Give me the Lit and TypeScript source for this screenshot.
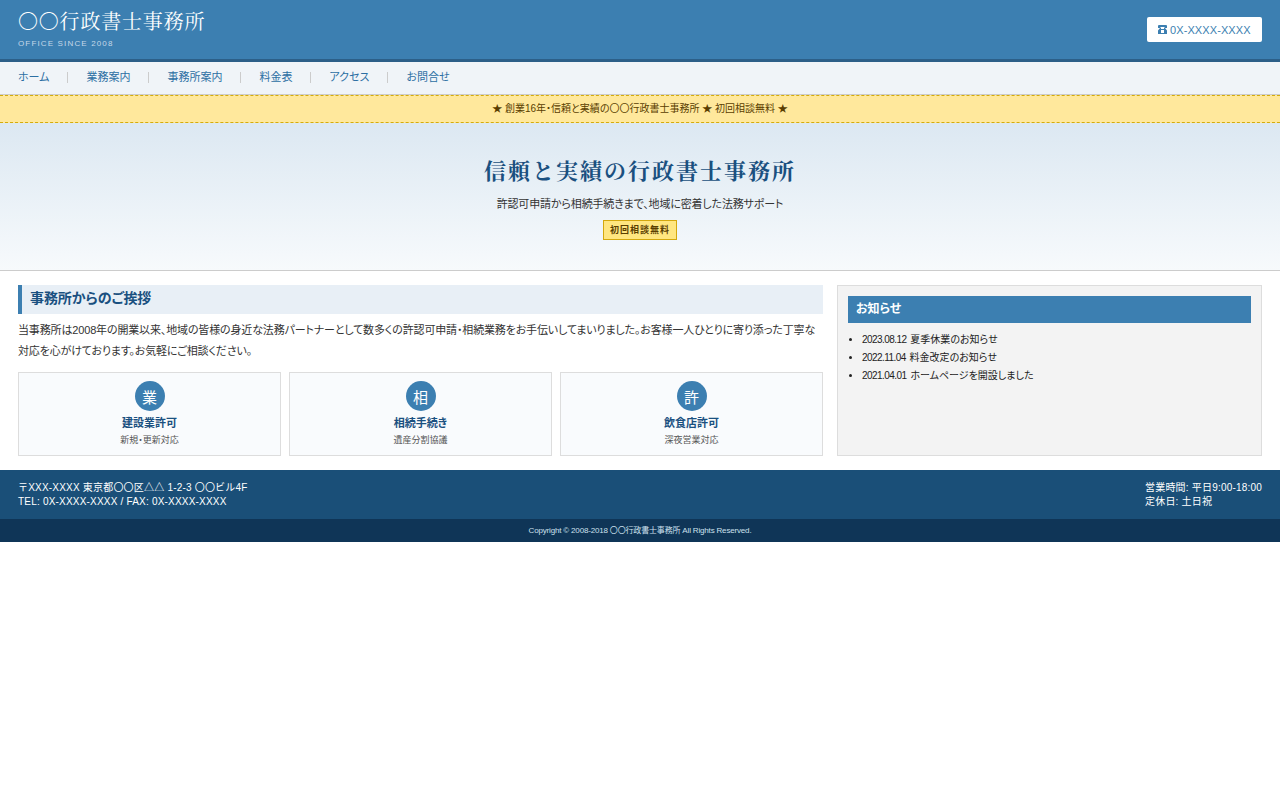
import { LitElement, html, css } from "lit";
import { customElement } from "lit/decorators.js";

const NAV = ["ホーム", "業務案内", "事務所案内", "料金表", "アクセス", "お問合せ"];

const SERVICES = [
  { icon: "業", title: "建設業許可", note: "新規・更新対応" },
  { icon: "相", title: "相続手続き", note: "遺産分割協議" },
  { icon: "許", title: "飲食店許可", note: "深夜営業対応" },
];

const NEWS = [
  { date: "2023.08.12", text: "夏季休業のお知らせ" },
  { date: "2022.11.04", text: "料金改定のお知らせ" },
  { date: "2021.04.01", text: "ホームページを開設しました" },
];

@customElement("app-root")
export class AppRoot extends LitElement {
  static styles = css`
    :host {
      display: block;
      font-family: "Liberation Sans", "Noto Sans CJK JP", sans-serif;
      font-size: 11px;
      font-feature-settings: "palt";
      color: #333;
      background: #fff;
    }

    .header {
      display: flex;
      justify-content: space-between;
      align-items: center;
      height: 59px;
      padding: 0 18px;
      background: #3c7fb1;
      border-bottom: 3px solid #2c5f88;
    }

    .logo {
      font-family: "Liberation Serif", "Noto Serif CJK JP", "Noto Sans CJK JP", serif;
      font-size: 20px;
      line-height: 24px;
      letter-spacing: 0.8px;
      font-feature-settings: normal;
      color: #fff;
    }

    .since {
      margin-top: 5px;
      font-size: 8px;
      line-height: 10px;
      letter-spacing: 1.15px;
      color: #c5d8e8;
    }

    .tel {
      display: flex;
      align-items: center;
      gap: 3px;
      width: 115px;
      height: 25px;
      box-sizing: border-box;
      padding-left: 11px;
      background: #fff;
      border-radius: 2px;
      color: #3c7fb1;
      letter-spacing: 0.1px;
    }

    .tel svg {
      width: 9px;
      height: 9px;
      fill: #3c7fb1;
    }

    .nav {
      display: flex;
      align-items: center;
      height: 30px;
      padding: 0 18px 2px;
      background: #f0f4f8;
      border-bottom: 1px solid #ccc;
      color: #2c6fa3;
    }

    .nav span {
      padding-right: 18px;
      margin-right: 18px;
      border-right: 1px solid #ccc;
      line-height: 11px;
    }

    .nav span:last-child {
      border-right: none;
    }

    .notice {
      height: 26px;
      line-height: 26px;
      text-align: center;
      background: #ffe89c;
      border-top: 1px dashed #d4ac0d;
      border-bottom: 1px dashed #d4ac0d;
      color: #5a3e00;
      font-size: 10px;
    }

    .hero {
      box-sizing: border-box;
      height: 148px;
      padding-top: 35px;
      text-align: center;
      background: linear-gradient(#dce8f2, #f7fafc);
      border-bottom: 1px solid #ccc;
    }

    .hero h1 {
      margin: 0;
      font-family: "Liberation Serif", "Noto Serif CJK JP", "Noto Sans CJK JP", serif;
      font-size: 22px;
      line-height: 28px;
      font-weight: 700;
      letter-spacing: 2px;
      font-feature-settings: normal;
      color: #1a5080;
    }

    .hero p {
      margin: 11px 0 0;
      line-height: 14px;
      letter-spacing: -0.15px;
    }

    .badge {
      display: block;
      width: fit-content;
      margin: 9px auto 0;
      padding: 0 6px;
      line-height: 18px;
      font-size: 9px;
      font-weight: 700;
      letter-spacing: 1px;
      font-feature-settings: normal;
      background: #ffe680;
      border: 1px solid #d4a80d;
      color: #5a3e00;
    }

    .main {
      display: flex;
      gap: 14px;
      padding: 14px 18px;
    }

    .content {
      width: 805px;
    }

    .content h2 {
      margin: 0;
      padding-left: 8px;
      height: 29px;
      line-height: 27px;
      font-size: 14px;
      letter-spacing: -0.1px;
      color: #1a5080;
      background: #e8eff6;
      border-left: 4px solid #3c7fb1;
    }

    .content p {
      margin: 6px 0 10px;
      line-height: 21px;
      letter-spacing: -0.15px;
      color: #333;
    }

    .cards {
      display: grid;
      grid-template-columns: repeat(3, 1fr);
      gap: 8px;
    }

    .card {
      height: 84px;
      box-sizing: border-box;
      padding-top: 8px;
      text-align: center;
      background: #f9fbfd;
      border: 1px solid #ddd;
    }

    .circle {
      display: flex;
      align-items: center;
      justify-content: center;
      width: 30px;
      height: 30px;
      margin: 0 auto;
      border-radius: 50%;
      background: #3c7fb1;
      color: #fff;
      font-size: 15px;
    }

    .card strong {
      display: block;
      margin-top: 5px;
      font-size: 11px;
      line-height: 14px;
      color: #1a5080;
    }

    .card small {
      display: block;
      margin-top: 4px;
      font-size: 9px;
      line-height: 12px;
      color: #555;
    }

    .side {
      width: 425px;
      box-sizing: border-box;
      padding: 10px;
      background: #f3f3f3;
      border: 1px solid #ddd;
    }

    .side h3 {
      margin: 0;
      height: 27px;
      line-height: 26px;
      padding-left: 8px;
      font-size: 12px;
      color: #fff;
      background: #3c7fb1;
    }

    .side ul {
      margin: 8px 0 0;
      padding-left: 14px;
      color: #222;
      font-size: 10px;
    }

    .side li {
      line-height: 18px;
    }

    .date {
      letter-spacing: -0.55px;
      margin-right: 1px;
    }

    .footer {
      display: flex;
      justify-content: space-between;
      align-items: center;
      height: 49px;
      padding: 0 18px;
      background: #1a4f78;
      color: #fff;
      font-size: 10px;
      line-height: 14px;
      letter-spacing: 0.2px;
      font-feature-settings: normal;
    }

    .copy {
      height: 23px;
      line-height: 23px;
      text-align: center;
      font-size: 8px;
      letter-spacing: -0.17px;
      background: #0f3557;
      color: #cde0ee;
    }
  `;

  render() {
    return html`
      <div class="header">
        <div>
          <div class="logo">〇〇行政書士事務所</div>
          <div class="since">OFFICE SINCE 2008</div>
        </div>
        <div class="tel">
          <svg viewBox="0 0 9 9">
            <path d="M0 1 Q0 0 1 0 H8 Q9 0 9 1 V3 H6.5 V2 H2.5 V3 H0 Z" />
            <path d="M2 3 H3 V4 H6 V3 H7 L9 5.5 V9 H0 V5.5 Z M3 5 V8 H6 V5 Z" fill-rule="evenodd" />
          </svg>
          0X-XXXX-XXXX
        </div>
      </div>
      <div class="nav">${NAV.map((n) => html`<span>${n}</span>`)}</div>
      <div class="notice">★ 創業16年・信頼と実績の〇〇行政書士事務所 ★ 初回相談無料 ★</div>
      <div class="hero">
        <h1>信頼と実績の行政書士事務所</h1>
        <p>許認可申請から相続手続きまで、地域に密着した法務サポート</p>
        <span class="badge">初回相談無料</span>
      </div>
      <div class="main">
        <div class="content">
          <h2>事務所からのご挨拶</h2>
          <p>当事務所は2008年の開業以来、地域の皆様の身近な法務パートナーとして数多くの許認可申請・相続業務をお手伝いしてまいりました。お客様一人ひとりに寄り添った丁寧な対応を心がけております。お気軽にご相談ください。</p>
          <div class="cards">
            ${SERVICES.map(
              (s) => html`<div class="card">
                <div class="circle">${s.icon}</div>
                <strong>${s.title}</strong>
                <small>${s.note}</small>
              </div>`,
            )}
          </div>
        </div>
        <div class="side">
          <h3>お知らせ</h3>
          <ul>
            ${NEWS.map((n) => html`<li><span class="date">${n.date}</span> ${n.text}</li>`)}
          </ul>
        </div>
      </div>
      <div class="footer">
        <div>〒XXX-XXXX 東京都〇〇区△△ 1-2-3 〇〇ビル4F<br />TEL: 0X-XXXX-XXXX / FAX: 0X-XXXX-XXXX</div>
        <div>営業時間: 平日9:00-18:00<br />定休日: 土日祝</div>
      </div>
      <div class="copy">Copyright © 2008-2018 〇〇行政書士事務所 All Rights Reserved.</div>
    `;
  }
}
